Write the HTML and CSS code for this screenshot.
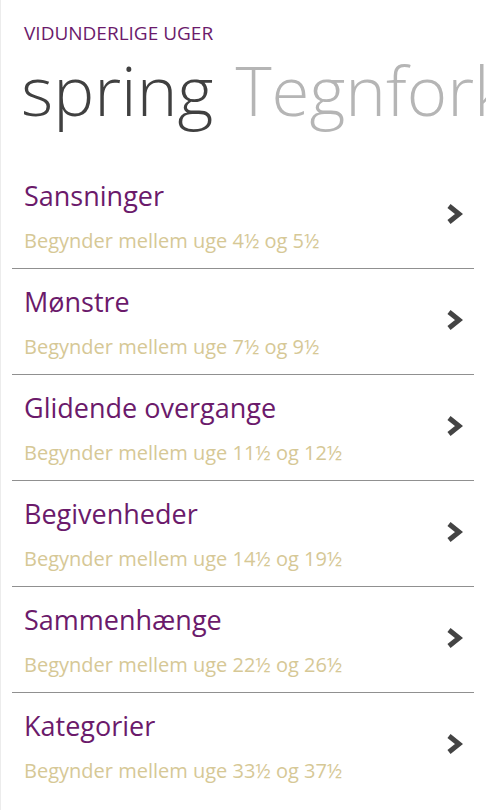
FILE: index.html
```html
<!DOCTYPE html>
<html>
<head>
    <title>Vidunderlige uger</title>
<link rel="stylesheet" href="styles.css">
</head>
<body>
    <div class="app">
        <div class="app-title">VIDUNDERLIGE UGER</div>
        <div class="pivot">
            <span class="pivot-item active">spring</span>
            <span class="pivot-item">Tegnforklaring</span>
        </div>

        <ul class="leaps">
            <li class="leap">
                <div class="leap-text">
                    <div class="leap-name">Sansninger</div>
                    <div class="leap-weeks">Begynder mellem uge 4½ og 5½</div>
                </div>
                <svg class="chevron" viewBox="0 0 20 24"><polyline points="4,4 14,12 4,20"/></svg>
            </li>
            <li class="leap">
                <div class="leap-text">
                    <div class="leap-name">Mønstre</div>
                    <div class="leap-weeks">Begynder mellem uge 7½ og 9½</div>
                </div>
                <svg class="chevron" viewBox="0 0 20 24"><polyline points="4,4 14,12 4,20"/></svg>
            </li>
            <li class="leap">
                <div class="leap-text">
                    <div class="leap-name">Glidende overgange</div>
                    <div class="leap-weeks">Begynder mellem uge 11½ og 12½</div>
                </div>
                <svg class="chevron" viewBox="0 0 20 24"><polyline points="4,4 14,12 4,20"/></svg>
            </li>
            <li class="leap">
                <div class="leap-text">
                    <div class="leap-name">Begivenheder</div>
                    <div class="leap-weeks">Begynder mellem uge 14½ og 19½</div>
                </div>
                <svg class="chevron" viewBox="0 0 20 24"><polyline points="4,4 14,12 4,20"/></svg>
            </li>
            <li class="leap">
                <div class="leap-text">
                    <div class="leap-name">Sammenhænge</div>
                    <div class="leap-weeks">Begynder mellem uge 22½ og 26½</div>
                </div>
                <svg class="chevron" viewBox="0 0 20 24"><polyline points="4,4 14,12 4,20"/></svg>
            </li>
            <li class="leap">
                <div class="leap-text">
                    <div class="leap-name">Kategorier</div>
                    <div class="leap-weeks">Begynder mellem uge 33½ og 37½</div>
                </div>
                <svg class="chevron" viewBox="0 0 20 24"><polyline points="4,4 14,12 4,20"/></svg>
            </li>
        </ul>
    </div>
</body>
</html>
```

FILE: styles.css
```css
body {
  font-family: "Open Sans", "Noto Sans", sans-serif;
  background-color: white;
  margin: 0;
  padding: 0;
}

.app {
  height: 810px;
  overflow: hidden;
  box-shadow: inset 1px 0 0 #ececec;
}

.app-title {
  color: #6b1a6b;
  font-size: 19px;
  line-height: 16px;
  padding: 25px 0 0 24px;
}

.pivot {
  white-space: nowrap;
  overflow: hidden;
  padding-left: 21px;
  height: 122px;
}

.pivot-item {
  font-size: 69px;
  font-weight: 300;
  line-height: 96px;
  color: #b5b5b5;
  margin-right: 18px;
}

.pivot-item.active {
  color: #404040;
}

ul {
  list-style: none;
  padding: 0;
  margin: 0 12px;
}

.leap {
  display: flex;
  height: 105px;
  border-bottom: 1px solid #909090;
}

.leap:last-child {
  border-bottom: none;
}

.leap-text {
  flex: 1;
  padding: 16px 0 0 12px;
}

.leap-name {
  color: #6b1a6b;
  font-size: 27px;
  line-height: 34px;
}

.leap-weeks {
  color: #d6c896;
  font-size: 20px;
  line-height: 28px;
  margin-top: 14px;
}

.chevron {
  align-self: center;
  width: 20px;
  height: 24px;
  margin: 0 9px 4px 0;
  fill: none;
  stroke: #444;
  stroke-width: 5;
}
```
